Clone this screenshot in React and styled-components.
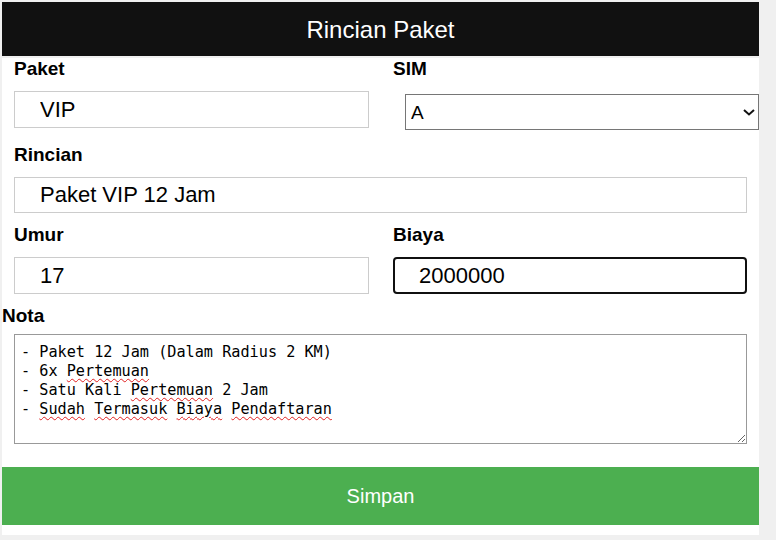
import { useEffect, useRef } from "react";
import styled, { createGlobalStyle } from "styled-components";

const GlobalStyle = createGlobalStyle`
    html, body {
        margin: 0;
        padding: 0;
        background: #f0f0f0;
        font-family: "Liberation Sans", Arial, sans-serif;
    }

    body {
        padding: 2px;
    }

    * {
        box-sizing: border-box;
    }
`

const Page = styled.div`
    width: 757px;
`

const Header = styled.div`
    display: flex;
    align-items: center;
    justify-content: center;
    height: 54px;
    padding-top: 1px;
    background: #111111;
    color: #ffffff;
    font-size: 24px;
`

const Form = styled.form`
    margin-top: 2px;
    padding: 1px 0 10px;
    background: #ffffff;
`

const Row = styled.div`
    display: grid;
    grid-template-columns: 379px 378px;
    margin-top: ${(p) => p.$top || 0}px;
`

const Field = styled.div`
    padding: 0 ${(p) => (p.$flush ? 0 : 12)}px;
    margin-top: ${(p) => p.$top || 0}px;
    position: relative;
`

const Label = styled.label`
    display: block;
    height: 20px;
    line-height: 20px;
    font-size: 19px;
    font-weight: bold;
    color: #000000;
    margin-bottom: ${(p) => p.$gap || 12}px;
`

const Input = styled.input`
    display: block;
    width: 100%;
    height: ${(p) => p.$h || 37}px;
    margin: 0;
    padding: 0 0 0 ${(p) => (p.$active ? 24 : 25)}px;
    border: ${(p) => (p.$active ? "2px solid #101010" : "1px solid #cccccc")};
    border-radius: ${(p) => (p.$active ? 4 : 0)}px;
    outline: none;
    font-family: "Liberation Sans", Arial, sans-serif;
    font-size: 22px;
    color: #000000;
    background: #ffffff;
    caret-color: #000000;
`

const SelectBox = styled.div`
    position: relative;
    width: 100%;
    margin: 3px 0 0 12px;
`

const Select = styled.select`
    display: block;
    width: 100%;
    height: 36px;
    margin: 0;
    padding: 0 0 0 5px;
    border: 1px solid #767676;
    border-radius: 0;
    appearance: none;
    background: #ffffff;
    font-family: "Liberation Sans", Arial, sans-serif;
    font-size: 19px;
    color: #000000;
    outline: none;
`

const Chevron = styled.svg`
    position: absolute;
    right: 4px;
    top: 15px;
    pointer-events: none;
`

const AreaBox = styled.div`
    position: relative;
    margin: 0 12px;
`

const monoText = `
    font-family: "DejaVu Sans Mono", "Liberation Mono", monospace;
    font-size: 15.2px;
    line-height: 19px;
    padding: 8px 6px;
    white-space: pre-wrap;
`

const TextArea = styled.textarea`
    display: block;
    width: 100%;
    height: 110px;
    margin: 0;
    border: 1px solid #999999;
    border-radius: 0;
    color: #000000;
    background: #ffffff;
    outline: none;
    ${monoText}
`

const SpellLayer = styled.div`
    position: absolute;
    inset: 0;
    border: 1px solid transparent;
    color: transparent;
    pointer-events: none;
    overflow: hidden;
    ${monoText}
`

const Typo = styled.span`
    text-decoration: underline wavy #e02020;
    text-decoration-thickness: 1px;
    text-underline-offset: 2px;
`

const SaveButton = styled.button`
    display: flex;
    align-items: center;
    justify-content: center;
    width: 100%;
    height: 58px;
    margin-top: 23px;
    border: none;
    background: #4caf50;
    color: #ffffff;
    font-family: "Liberation Sans", Arial, sans-serif;
    font-size: 20px;
    cursor: pointer;
`

const nota = [
    "- Paket 12 Jam (Dalam Radius 2 KM)",
    "- 6x Pertemuan",
    "- Satu Kali Pertemuan 2 Jam",
    "- Sudah Termasuk Biaya Pendaftaran",
]

const typos = ["Pertemuan", "Sudah", "Termasuk", "Biaya", "Pendaftaran"]

const SpellLine = ({ text }) =>
    text.split(/(\s+)/).map((part, i) =>
        typos.includes(part) ? <Typo key={i}>{part}</Typo> : <span key={i}>{part}</span>
    )

const App = () => {
    const biayaRef = useRef(null)

    useEffect(() => {
        const el = biayaRef.current
        if (el) {
            el.focus()
            el.setSelectionRange(el.value.length, el.value.length)
        }
    }, [])

    return (
        <Page>
            <GlobalStyle />
            <Header>Rincian Paket</Header>
            <Form onSubmit={(e) => e.preventDefault()}>
                <Row>
                    <Field>
                        <Label>Paket</Label>
                        <Input defaultValue="VIP" />
                    </Field>
                    <Field>
                        <Label $gap={15}>SIM</Label>
                        <SelectBox>
                            <Select defaultValue="A">
                                <option value="A">A</option>
                                <option value="B">B</option>
                                <option value="C">C</option>
                            </Select>
                            <Chevron width="12" height="7" viewBox="0 0 12 7">
                                <path d="M1 1 L6 5.5 L11 1" fill="none" stroke="#111" strokeWidth="2" />
                            </Chevron>
                        </SelectBox>
                    </Field>
                </Row>

                <Field $top={15}>
                    <Label>Rincian</Label>
                    <Input $h={36} defaultValue="Paket VIP 12 Jam" />
                </Field>

                <Row $top={12}>
                    <Field>
                        <Label>Umur</Label>
                        <Input defaultValue="17" />
                    </Field>
                    <Field>
                        <Label>Biaya</Label>
                        <Input $active ref={biayaRef} defaultValue="2000000" />
                    </Field>
                </Row>

                <Field $flush $top={12}>
                    <Label $gap={8}>Nota</Label>
                    <AreaBox>
                        <TextArea spellCheck={false} defaultValue={nota.join("\n")} />
                        <SpellLayer>
                            {nota.map((line, i) => (
                                <div key={i}>
                                    <SpellLine text={line} />
                                </div>
                            ))}
                        </SpellLayer>
                    </AreaBox>
                </Field>

                <SaveButton type="submit">Simpan</SaveButton>
            </Form>
        </Page>
    )
}

export default App;
